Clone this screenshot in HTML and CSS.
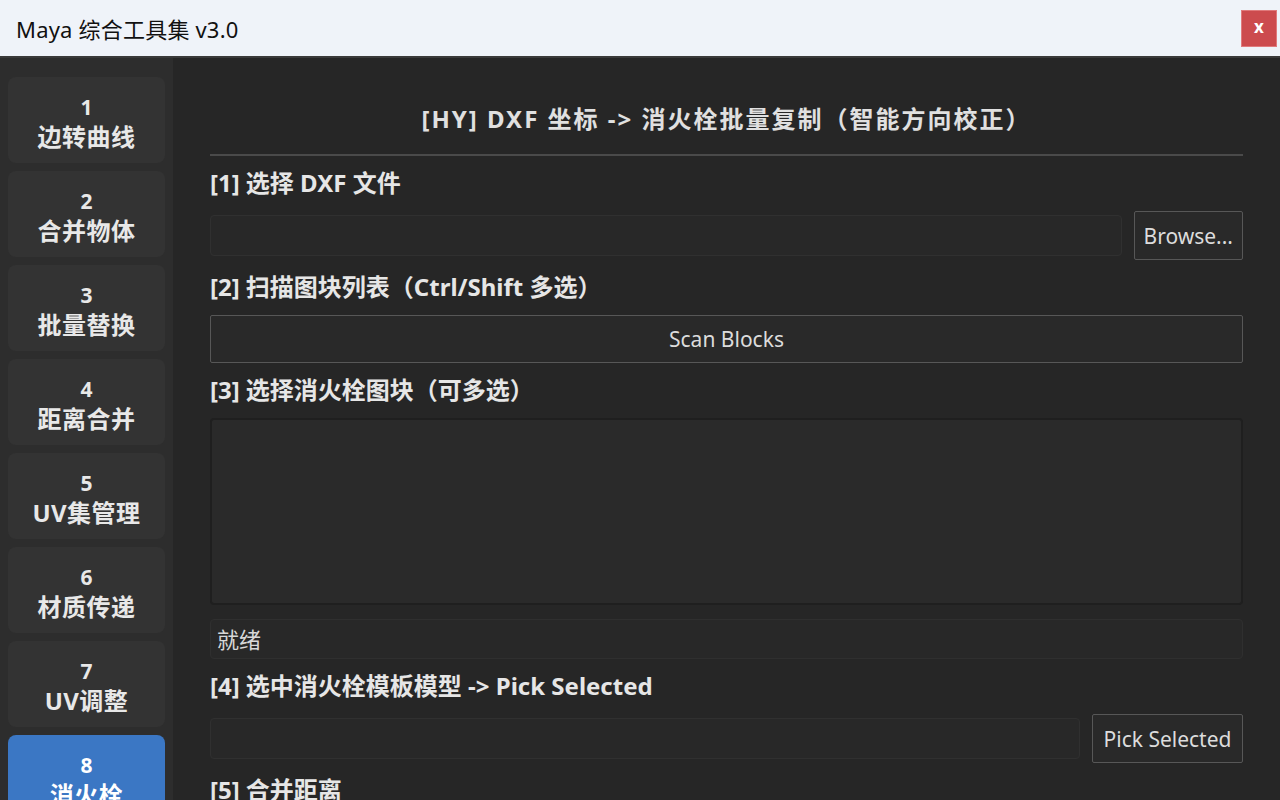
FILE: index.html
```html
<!DOCTYPE html>
<html lang="zh-CN">
<head>
  <meta charset="UTF-8">
  <title>Maya 综合工具集 v3.0</title>
  <link rel="stylesheet" href="styles.css">
</head>
<body>
  <div class="titlebar">
    <span class="title">Maya 综合工具集 v3.0</span>
    <button class="close">x</button>
  </div>

  <div class="window">
    <div class="sidebar">
      <div class="tab"><span class="num">1</span><span class="name">边转曲线</span></div>
      <div class="tab"><span class="num">2</span><span class="name">合并物体</span></div>
      <div class="tab"><span class="num">3</span><span class="name">批量替换</span></div>
      <div class="tab"><span class="num">4</span><span class="name">距离合并</span></div>
      <div class="tab"><span class="num">5</span><span class="name">UV集管理</span></div>
      <div class="tab"><span class="num">6</span><span class="name">材质传递</span></div>
      <div class="tab"><span class="num">7</span><span class="name">UV调整</span></div>
      <div class="tab active"><span class="num">8</span><span class="name">消火栓</span></div>
    </div>

    <div class="panel">
      <h2 class="heading">[HY] DXF 坐标 -&gt; 消火栓批量复制（智能方向校正）</h2>
      <hr class="sep">

      <div class="label">[1] 选择 DXF 文件</div>
      <div class="row">
        <input class="field" type="text">
        <button class="btn">Browse...</button>
      </div>

      <div class="label">[2] 扫描图块列表（Ctrl/Shift 多选）</div>
      <button class="btn wide">Scan Blocks</button>

      <div class="label">[3] 选择消火栓图块（可多选）</div>
      <div class="list"></div>
      <div class="status">就绪</div>

      <div class="label">[4] 选中消火栓模板模型 -&gt; Pick Selected</div>
      <div class="row">
        <input class="field" type="text">
        <button class="btn pick">Pick Selected</button>
      </div>

      <div class="label">[5] 合并距离</div>
    </div>
  </div>
</body>
</html>
```

FILE: styles.css
```css
body {
  margin: 0;
  height: 800px;
  overflow: hidden;
  background-color: #262626;
  color: #e6e6e6;
  font-family: 'Noto Sans', 'Noto Sans CJK SC', sans-serif;
}
.titlebar {
  height: 56px;
  background-color: #eff3f9;
  border-bottom: 2px solid #3a3a3a;
  display: flex;
  align-items: center;
  justify-content: space-between;
  padding: 0 3px 0 16px;
}
.title {
  color: #111;
  font-size: 22px;
  letter-spacing: 0.2px;
}
.close {
  width: 36px;
  height: 37px;
  background-color: #cc4b4e;
  border: 1px solid #e07a7c;
  color: #fff;
  font-family: 'Noto Sans', sans-serif;
  font-weight: bold;
  font-size: 17px;
  padding: 0 0 3px;
}
.window {
  display: flex;
  height: 742px;
}

/* left column of tool tabs */
.sidebar {
  width: 157px;
  background-color: #2d2d2d;
  padding: 19px 8px 0;
  display: flex;
  flex-direction: column;
  gap: 8px;
  flex-shrink: 0;
}
.tab {
  height: 86px;
  box-sizing: border-box;
  padding-top: 6px;
  flex-shrink: 0;
  background-color: #333;
  border-radius: 8px;
  display: flex;
  flex-direction: column;
  align-items: center;
  justify-content: center;
  font-weight: bold;
  color: #e8e8e8;
}
.tab .num {
  font-size: 21px;
  line-height: 28px;
}
.tab .name {
  font-size: 24px;
  line-height: 32px;
  letter-spacing: 0.5px;
}
.tab.active {
  background-color: #3b77c4;
  color: #fff;
}

/* main form */
.panel {
  flex: 1;
  padding: 46px 37px 0;
  display: flex;
  flex-direction: column;
  gap: 11px;
}
.panel > * {
  flex-shrink: 0;
}
.heading {
  margin: 0 0 9px;
  font-size: 24px;
  line-height: 30px;
  letter-spacing: 2px;
  text-align: center;
  font-weight: bold;
  color: #e0e0e0;
}
.sep {
  margin: 0;
  border: none;
  border-top: 2px solid #4a4a4a;
}
.label {
  margin: 1px 0 2px;
  font-size: 24px;
  line-height: 30px;
  font-weight: bold;
  color: #e6e6e6;
}
.row {
  display: flex;
  align-items: center;
  gap: 12px;
  height: 49px;
}
.field {
  flex: 1;
  height: 41px;
  box-sizing: border-box;
  background-color: #282828;
  border: 1px solid #303030;
  border-radius: 4px;
}
.btn {
  height: 49px;
  box-sizing: border-box;
  background-color: #292929;
  border: 1px solid #575757;
  border-radius: 2px;
  color: #dcdcdc;
  font-family: 'Noto Sans', sans-serif;
  font-size: 21px;
  padding: 0 9px;
}
.btn.wide {
  width: 100%;
  height: 48px;
}
.btn.pick {
  width: 151px;
}
.list {
  height: 187px;
  box-sizing: border-box;
  background-color: #2a2a2a;
  border: 2px solid #1f1f1f;
  border-radius: 4px;
}
.status {
  height: 40px;
  margin-top: 3px;
  box-sizing: border-box;
  background-color: #282828;
  border: 1px solid #2f2f2f;
  border-radius: 4px;
  padding: 0 6px;
  font-size: 22px;
  line-height: 38px;
  color: #d8d8d8;
}
```
